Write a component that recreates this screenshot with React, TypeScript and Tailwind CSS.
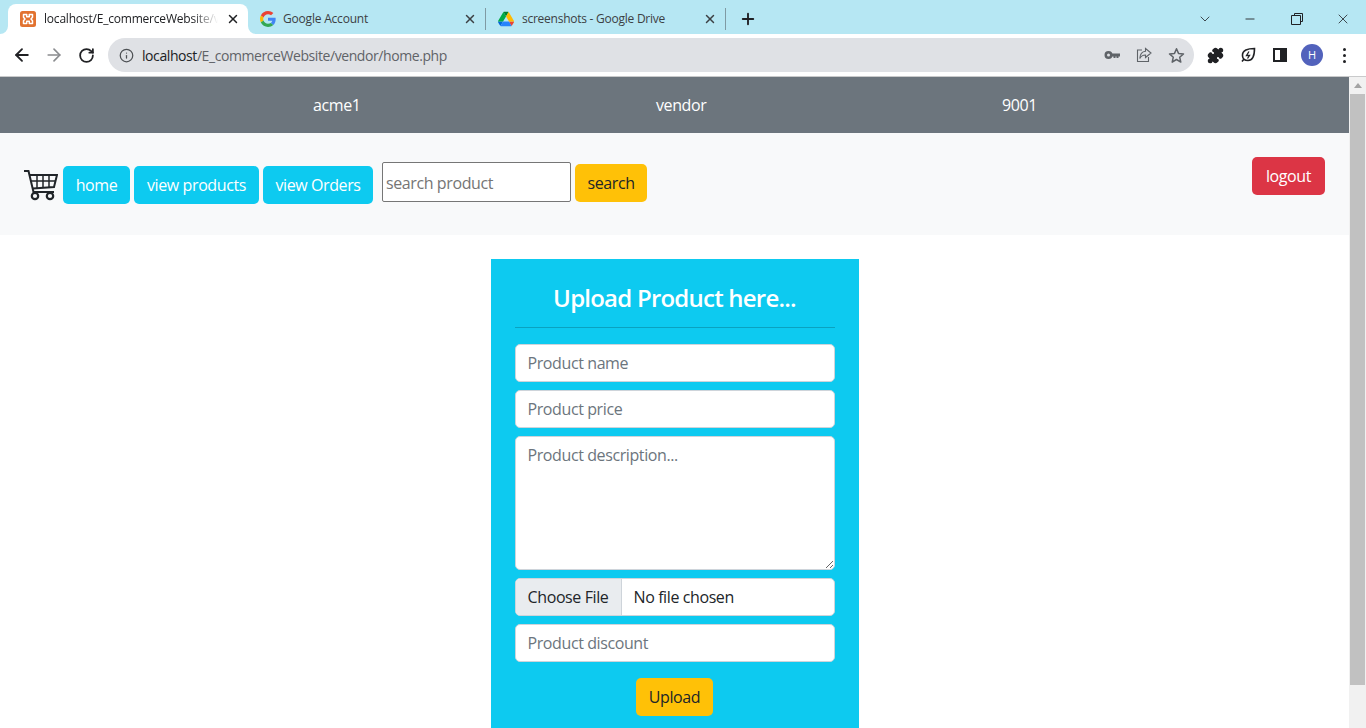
import { X, Plus, ChevronDown, Minus, ArrowLeft, ArrowRight, RotateCw, Info, Puzzle } from 'lucide-react';

const font = "[font-family:'Open_Sans','Noto_Sans',sans-serif]";

function TabCorner({ side }: { side: 'left' | 'right' }) {
  return (
    <svg width="8" height="8" viewBox="0 0 8 8" className={side === 'left' ? 'absolute bottom-0 -left-2' : 'absolute bottom-0 -right-2'}>
      <path d={side === 'left' ? 'M8 0V8H0A8 8 0 0 0 8 0Z' : 'M0 0V8H8A8 8 0 0 1 0 0Z'} fill="#fff" />
    </svg>
  );
}

function XamppIcon() {
  return (
    <svg width="16" height="16" viewBox="0 0 16 16" className="shrink-0">
      <rect width="16" height="16" rx="2.500" fill="#e2722f" />
      <path d="M3.500 3.500h3.200v2.300h2.600V3.500h3.200v2.800L11 8l1.500 1.700v2.800H9.300v-2.300H6.700v2.300H3.500V9.700L5 8 3.500 6.300Z" fill="none" stroke="#fff" strokeWidth="1.500" strokeLinejoin="round" />
    </svg>
  );
}

function GoogleIcon() {
  return (
    <svg width="16" height="16" viewBox="0 0 48 48" className="shrink-0">
      <path fill="#EA4335" d="M24 9.500c3.500 0 6.700 1.200 9.200 3.600l6.900-6.900C35.900 2.400 30.500 0 24 0 14.600 0 6.500 5.400 2.600 13.200l8 6.200C12.400 13.700 17.700 9.500 24 9.500z" />
      <path fill="#4285F4" d="M47 24.500c0-1.600-.1-3.100-.4-4.500H24v9h12.900c-.6 3-2.200 5.500-4.700 7.200l7.700 6C44.400 38 47 31.800 47 24.500z" />
      <path fill="#FBBC05" d="M10.500 28.600c-.5-1.400-.8-3-.8-4.600s.3-3.200.8-4.600l-8-6.200C.9 16.500 0 20.100 0 24s.9 7.500 2.600 10.800l7.900-6.200z" />
      <path fill="#34A853" d="M24 48c6.500 0 11.900-2.100 15.900-5.800l-7.700-6c-2.200 1.400-4.900 2.300-8.200 2.300-6.300 0-11.600-4.200-13.500-9.900l-8 6.200C6.500 42.600 14.600 48 24 48z" />
    </svg>
  );
}

function DriveIcon() {
  return (
    <svg width="16" height="16" viewBox="0 0 87 78" className="shrink-0">
      <path fill="#0066DA" d="M6.600 66.900 10.400 73.500c.8 1.400 1.900 2.500 3.200 3.300L27.500 53H0c0 1.500.4 3 1.200 4.400z" />
      <path fill="#00AC47" d="M43.700 25 29.900 1.200c-1.300.8-2.400 1.900-3.200 3.300L1.200 48.600C.4 50 0 51.500 0 53h27.500z" />
      <path fill="#EA4335" d="M73.600 76.800c1.300-.8 2.400-1.900 3.200-3.300l1.600-2.800 7.600-13.200c.8-1.400 1.200-2.900 1.200-4.400H59.800l5.900 11.500z" />
      <path fill="#00832D" d="M43.700 25 57.500 1.200C56.200.4 54.700 0 53.100 0H34.300c-1.600 0-3.100.5-4.400 1.200z" />
      <path fill="#2684FC" d="M59.800 53H27.500L13.700 76.800c1.300.8 2.800 1.200 4.400 1.200h51.100c1.600 0 3.100-.5 4.400-1.200z" />
      <path fill="#FFBA00" d="M73.400 26.500 60.700 4.500c-.8-1.400-1.900-2.500-3.200-3.300L43.700 25l16.100 28h27.400c0-1.500-.4-3-1.200-4.400z" />
    </svg>
  );
}

function Cart() {
  return (
    <svg width="34" height="34" viewBox="0 0 34 34" fill="none" stroke="#212529" className="shrink-0">
      <path d="M0 3h4.500l5 21H30" strokeWidth="2" />
      <path d="M5.500 7H33l-3 12-21 1.500" strokeWidth="2" />
      <path d="M7 13h25M13 7v13M19 7v13M25 7v13" strokeWidth="1.500" />
      <circle cx="11" cy="28" r="3.200" strokeWidth="2.200" />
      <circle cx="26" cy="28" r="3.200" strokeWidth="2.200" />
    </svg>
  );
}

const field =
  'w-full h-[38px] bg-white rounded-[5px] border border-[#ced4da] px-3 text-[16px] tracking-[-0.4px] text-[#212529] placeholder:text-[#6c757d] outline-none';

export default function App() {
  return (
    <div className={`h-screen overflow-hidden flex flex-col bg-white ${font}`}>
      {/* tab strip */}
      <div className="h-[34px] shrink-0 bg-[#b6e7f3] flex items-end pl-2 text-[12px] text-[#3c4043]">
        <div className="relative w-[240px] h-[30px] bg-white rounded-t-[8px] flex items-center pl-3 pr-2 gap-2 text-[#202124]">
          <TabCorner side="left" />
          <TabCorner side="right" />
          <XamppIcon />
          <span className="flex-1 min-w-0 whitespace-nowrap tracking-[-0.2px] [mask-image:linear-gradient(to_right,black_85%,transparent)]">localhost/E_commerceWebsite/ve</span>
          <X size={14} strokeWidth={2.500} className="shrink-0" />
        </div>
        <div className="w-[238px] h-[22px] mb-[4px] flex items-center pl-3 pr-2 gap-2 border-r border-[#7f9aa3]">
          <GoogleIcon />
          <span className="flex-1 -ml-px whitespace-nowrap tracking-[-0.2px]">Google Account</span>
          <X size={14} strokeWidth={2.500} className="shrink-0" />
        </div>
        <div className="w-[240px] h-[22px] mb-[4px] flex items-center pl-3 pr-2 gap-2 border-r border-[#7f9aa3]">
          <DriveIcon />
          <span className="flex-1 whitespace-nowrap tracking-[-0.25px]">screenshots - Google Drive</span>
          <X size={14} strokeWidth={2.500} className="shrink-0" />
        </div>
        <div className="h-[30px] flex items-center pl-[13px] text-[#202124]">
          <Plus size={18} strokeWidth={2.500} />
        </div>
        <div className="ml-auto h-[30px] flex items-center text-[#202124]">
          <ChevronDown size={16} strokeWidth={1.200} className="mr-[30px]" />
          <Minus size={14} strokeWidth={1.500} className="mr-[34px]" />
          <svg width="12" height="12" viewBox="0 0 12 12" fill="none" stroke="#202124" className="mr-[32px]">
            <path d="M3.500 2.500V.5h8v8h-2M.5 2.500h9v9h-9z" />
          </svg>
          <X size={16} strokeWidth={1.200} className="mr-[15px]" />
        </div>
      </div>

      {/* toolbar */}
      <div className="h-[43px] shrink-0 bg-white border-b border-[#c9cacb] flex items-center text-[#202124]">
        <ArrowLeft size={20} strokeWidth={2.200} className="ml-3" />
        <ArrowRight size={20} strokeWidth={2} className="ml-3 text-[#8a8c8f]" />
        <RotateCw size={17} strokeWidth={2.500} className="ml-[14px]" />
        <div className="ml-[13px] w-[1086px] h-[34px] rounded-full bg-[#dfe1e5] flex items-center pl-[11px] text-[14px] text-[#5f6368]">
          <Info size={15} strokeWidth={2} className="text-[#4d5054]" />
          <span className="ml-[8px] tracking-[-0.42px]">
            <span className="text-[#202124]">localhost</span>/E_commerceWebsite/vendor/home.php
          </span>
          <div className="ml-auto flex items-center gap-[16px] pr-[9px]">
            <svg width="16" height="16" viewBox="0 0 16 16" fill="#5f6368">
              <path d="M4.500 4a4 4 0 1 1 0 8 4 4 0 0 1 0-8Zm0 2.500a1.500 1.500 0 1 0 0 3 1.500 1.500 0 0 0 0-3Z" fillRule="evenodd" />
              <path d="M7.500 6.500H16v3h-1.500V11h-2V9.500h-1V11h-2V9.500H7.500Z" />
            </svg>
            <svg width="16" height="16" viewBox="0 0 16 16" fill="none" stroke="#5f6368" strokeWidth="1.100">
              <path d="M6 3H1.500v11.500h11V10" />
              <path d="M9.500 1.500 15 6l-5.500 4.500V8C7 8 5 9 3.800 11.500 4 7.500 6 4.500 9.500 4.200Z" />
            </svg>
            <svg width="17" height="17" viewBox="0 0 17 17" fill="none" stroke="#5f6368" strokeWidth="1.500" strokeLinejoin="round">
              <path d="m8.500 1.800 2 4.600 5 .5-3.800 3.300 1.100 4.900-4.300-2.600-4.300 2.600 1.100-4.900L1.500 6.900l5-.5Z" />
            </svg>
          </div>
        </div>
        <Puzzle size={17} fill="#202124" strokeWidth={2} className="ml-[13px]" />
        <svg width="16" height="16" viewBox="0 0 16 16" fill="none" stroke="#202124" strokeWidth="1.600" className="ml-[16px]">
          <path d="M2 14.500 4 12M14.500 1.500C8 1.500 2 3 2.500 9c.3 3 2.500 4.500 5.500 4.500 4.500 0 6.500-5 6.500-12Z" />
          <path d="M9 4.500 6.500 8.500h3L7.500 11.500" strokeWidth="1.300" />
        </svg>
        <div className="ml-[17px] w-[14px] h-[14px] border-2 border-[#202124] flex justify-end">
          <div className="w-[5px] bg-[#202124]" />
        </div>
        <div className="ml-[14px] w-[22px] h-[22px] rounded-full bg-[#5262bc] text-white text-[11px] flex items-center justify-center">H</div>
        <div className="ml-[20px] flex flex-col gap-[3px]">
          <div className="w-[3px] h-[3px] rounded-full bg-[#202124]" />
          <div className="w-[3px] h-[3px] rounded-full bg-[#202124]" />
          <div className="w-[3px] h-[3px] rounded-full bg-[#202124]" />
        </div>
      </div>

      {/* page */}
      <div className="flex-1 min-h-0 flex tracking-[-0.4px]">
        <div className="flex-1 min-w-0 overflow-hidden">
          <div className="h-[56px] bg-[#6c757d] flex items-center pl-[313px] text-white text-[16px]">
            <div className="w-[343px]">acme1</div>
            <div className="w-[346px]">vendor</div>
            <div>9001</div>
          </div>

          <div className="h-[102px] bg-[#f8f9fa] flex pl-6 pr-6 text-[16px]">
            <div className="flex items-center mt-[2px] h-[100px]">
              <Cart />
              <a className="ml-[5px] h-[38px] w-[67px] justify-center rounded-[5px] bg-[#0dcaf0] text-white flex items-center">home</a>
              <a className="ml-1 h-[38px] w-[125px] justify-center rounded-[5px] bg-[#0dcaf0] text-white flex items-center">view products</a>
              <a className="ml-1 h-[38px] w-[110px] justify-center rounded-[5px] bg-[#0dcaf0] text-white flex items-center">view Orders</a>
            </div>
            <div className="flex items-start mt-[29px] ml-[9px]">
              <input
                placeholder="search product"
                className="w-[189px] h-[40px] bg-white border border-[#767676] rounded-[2px] px-[3px] pt-[2px] text-[16px] tracking-[-0.4px] placeholder:text-[#757575] outline-none"
              />
              <button className="ml-1 mt-[2px] h-[38px] w-[72px] rounded-[5px] bg-[#ffc107] text-[#212529] text-[16px] tracking-[-0.4px]">search</button>
            </div>
            <button className="ml-auto mt-[24px] h-[38px] w-[73px] rounded-[5px] bg-[#dc3545] text-white text-[16px] tracking-[-0.4px]">logout</button>
          </div>

          <div className="pt-6 flex justify-center">
            <form className="w-[368px] bg-[#0dcaf0] px-6 pt-[23px] pb-6">
              <h3 className="text-[24px] leading-[32px] font-semibold tracking-[-0.77px] text-white text-center">Upload Product here...</h3>
              <hr className="mt-[13px] mb-4 border-[#0aa2c0]" />
              <div className="flex flex-col gap-2">
                <input placeholder="Product name" className={field} />
                <input placeholder="Product price" className={field} />
                <textarea placeholder="Product description..." className="w-full h-[134px] block bg-white rounded-[5px] border border-[#ced4da] px-3 py-[6px] text-[16px] tracking-[-0.4px] text-[#212529] placeholder:text-[#6c757d] outline-none" />
                <div className="h-[38px] bg-white rounded-[5px] border border-[#ced4da] overflow-hidden flex items-center text-[16px] text-[#212529]">
                  <span className="h-full w-[106px] justify-center flex items-center bg-[#e9ecef] border-r border-[#ced4da]">Choose File</span>
                  <span className="ml-3">No file chosen</span>
                </div>
                <input placeholder="Product discount" className={field} />
              </div>
              <div className="flex justify-center mt-4">
                <button type="button" className="h-[38px] w-[77px] rounded-[5px] bg-[#ffc107] text-[#212529] text-[16px] tracking-[-0.4px]">Upload</button>
              </div>
            </form>
          </div>
        </div>

        {/* scrollbar */}
        <div className="w-[17px] shrink-0 bg-[#f1f1f1] flex flex-col items-center">
          <div className="mt-[6px] w-0 h-0 border-x-[4px] border-x-transparent border-b-[5px] border-b-[#a3a3a3]" />
          <div className="mt-[6px] w-[15px] h-[591px] bg-[#c1c1c1]" />
        </div>
      </div>
    </div>
  );
}
